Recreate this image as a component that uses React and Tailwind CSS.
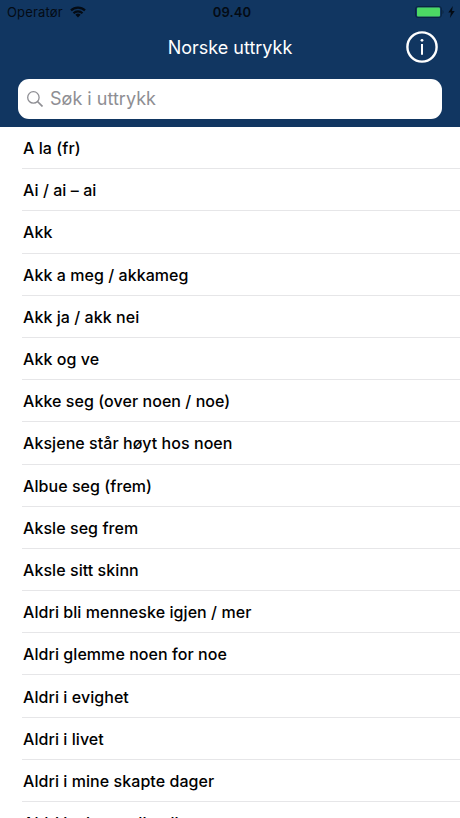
import React, { useState } from 'react';

const uttrykk = [
  'A la (fr)',
  'Ai / ai – ai',
  'Akk',
  'Akk a meg / akkameg',
  'Akk ja / akk nei',
  'Akk og ve',
  'Akke seg (over noen / noe)',
  'Aksjene står høyt hos noen',
  'Albue seg (frem)',
  'Aksle seg frem',
  'Aksle sitt skinn',
  'Aldri bli menneske igjen / mer',
  'Aldri glemme noen for noe',
  'Aldri i evighet',
  'Aldri i livet',
  'Aldri i mine skapte dager',
  'Aldri i mitt syndige liv',
];

const StatusBar = () => (
  <div className="relative flex h-6 items-center justify-between pl-[7px] pr-[5px] text-[#040b14]">
    <div className="flex items-center gap-[7px]">
      <span className="pt-[2px] text-[13px] tracking-[0.15px]">Operatør</span>
      <svg width="16" height="12" viewBox="0 0 16 12" fill="none" stroke="currentColor" strokeWidth="2.2">
        <path d="M1 4.4a10 10 0 0 1 14 0" />
        <path d="M3.5 7.2a6.4 6.4 0 0 1 9 0" />
        <path d="M8 11.4 5.4 8.8a3.7 3.7 0 0 1 5.2 0z" fill="currentColor" stroke="none" />
      </svg>
    </div>
    <span className="absolute inset-x-0 pl-[4px] pt-[2px] text-center text-[13px] font-semibold tracking-[0.1px]">09.40</span>
    <div className="flex items-center gap-[4px]">
      <svg width="29" height="12" viewBox="0 0 29 12">
        <rect x="0.5" y="0.5" width="26" height="11" rx="2.5" fill="none" stroke="#0a2440" />
        <rect x="2" y="1.5" width="23" height="9" rx="1" fill="#4cd964" />
        <path d="M27.5 4v4c1.4-.6 1.4-3.4 0-4z" fill="#0a2440" />
      </svg>
      <svg width="7" height="12" viewBox="0 0 7 12" fill="currentColor">
        <path d="M4.8 0 0.3 6.6h2.6L1.9 12 6.7 5H4z" />
      </svg>
    </div>
  </div>
);

const App = () => {
  const [sok, setSok] = useState('');
  const treff = uttrykk.filter(u => u.toLowerCase().includes(sok.toLowerCase()));

  return (
    <div className="h-screen overflow-hidden bg-white font-[Inter,sans-serif]">
      {/* Header */}
      <header className="h-[127px] bg-[#113661]">
        <StatusBar />
        <div className="grid h-[45px] grid-cols-[1fr_auto_1fr] items-center px-[22px]">
          <h1 className="col-start-2 pt-[2px] text-[18px] tracking-[-0.01px] text-white">Norske uttrykk</h1>
          <button aria-label="Info" className="justify-self-end text-white">
            <svg width="32" height="32" viewBox="0 0 32 32" fill="none" stroke="currentColor">
              <circle cx="16" cy="16" r="14.6" strokeWidth="2.4" />
              <path d="M16 13v10.7" strokeWidth="2" />
              <circle cx="16" cy="9.3" r="1.4" fill="currentColor" stroke="none" />
            </svg>
          </button>
        </div>
        <label className="mx-[18px] mt-[10px] flex h-10 items-center gap-[7px] rounded-[11px] bg-white pl-[9px]">
          <svg width="16" height="16" viewBox="0 0 16 16" fill="none" stroke="#8e8e93" strokeWidth="1.3">
            <circle cx="6.4" cy="6.4" r="5.7" />
            <path d="m10.5 10.5 5 5" strokeWidth="1.7" />
          </svg>
          <input
            value={sok}
            onChange={(e) => setSok(e.target.value)}
            placeholder="Søk i uttrykk"
            className="flex-1 pb-[2px] text-[18px] tracking-[0.02px] outline-none placeholder:text-[#8e8e93]"
          />
        </label>
      </header>

      {/* Liste */}
      <ul className="pl-[22px]">
        {treff.map((u) => (
          <li key={u} className="flex h-[42.2px] items-center border-b border-[#e6e6e8] pl-px pt-px text-[16px] font-medium tracking-[0.06px] text-black">
            {u}
          </li>
        ))}
      </ul>
    </div>
  );
};

export default App;
